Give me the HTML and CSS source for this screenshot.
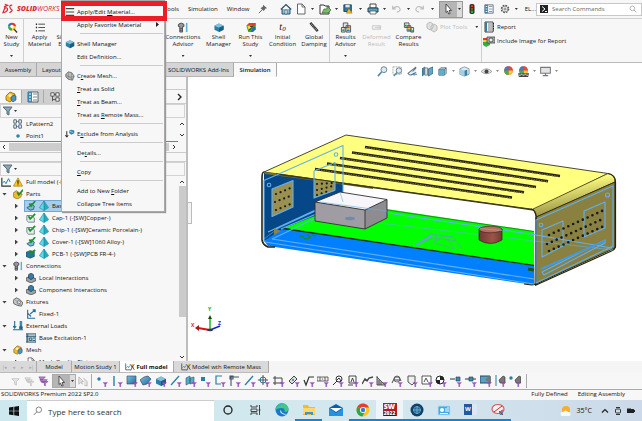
FILE: index.html
```html
<!DOCTYPE html>
<html lang="en">
<head>
<meta charset="utf-8">
<title>SOLIDWORKS Premium 2022 SP2.0</title>
<link rel="stylesheet" href="styles.css">
</head>
<body>
<svg class="defs" aria-hidden="true">
<defs>
<linearGradient id="steel" x1="0" y1="0" x2="1" y2="1"><stop offset="0" stop-color="#7cc4e4"/><stop offset="1" stop-color="#1c6b96"/></linearGradient>
<linearGradient id="bend" x1="0" y1="0" x2="0.35" y2="1"><stop offset="0.3" stop-color="#ffff80"/><stop offset="1" stop-color="#8a8440"/></linearGradient>
<linearGradient id="can" x1="0" x2="1"><stop offset="0" stop-color="#6e3a34"/><stop offset="0.6" stop-color="#9c5448"/><stop offset="1" stop-color="#6e3a34"/></linearGradient>
</defs>
<symbol id="funnel" viewBox="0 0 12 12"><path d="M1 2h9L7 6v4L5 9V6z" fill="#8ba6b4" stroke="#4b6472" stroke-width=".9"/></symbol>
<symbol id="fgray" viewBox="0 0 12 12"><path d="M2 3h8L7 6v4L5 9V6z" fill="#e8e8e8" stroke="#bbb" stroke-width=".8"/></symbol>
<symbol id="fstack" viewBox="0 0 12 12"><path d="M1 2h6L5 5H3zM2 4h7L7 7H4zM4 6h7L8 8v3L7 10V8z" fill="#e4e4e4" stroke="#bbb" stroke-width=".7"/></symbol>
<symbol id="fpurple" viewBox="0 0 12 12"><path d="M1 1h7L5 4H3zM2 4h8L7 7H4zM4 6h7L8 8v3L7 10V8z" fill="#b58ac8" stroke="#7d4296" stroke-width=".7"/></symbol>
<symbol id="fn" viewBox="0 0 12 12"><path d="M7 7.500h4.500L9.800 9.300v2.400H8.700V9.300z" fill="#a34bc8" stroke="#8f45ae" stroke-width=".3"/></symbol>
<symbol id="cursor" viewBox="0 0 12 12"><path d="M4 1l5.500 6.500H7l1.200 3-1.400.6-1.300-3L4 9.500z" fill="#fff" stroke="#333" stroke-width=".8"/></symbol>
<symbol id="cube" viewBox="0 0 12 12"><path d="M1 4l5-2.500L11 4v4.500L6 11 1 8.500z" fill="#2c7fa8"/><path d="M1 4l5-2.500L11 4 6 6.200z" fill="#7fc3df"/><path d="M6 6.200L11 4v4.500L6 11z" fill="#1c5d83"/></symbol>
<symbol id="steelcube" viewBox="0 0 12 12"><path d="M2 4l2-2h6v6L8 10H2z" fill="#bfe3f2" stroke="#3c4b55" stroke-width=".8"/><path d="M2 4h6v6M8 4l2-2" fill="none" stroke="#3c4b55" stroke-width=".8"/><path d="M2 4h6v6H2z" fill="#5aaed2"/></symbol>
<symbol id="shaded" viewBox="0 0 12 12"><path d="M1 3l5-2 5 2v6l-5 2-5-2z" fill="#e2edf2" stroke="#6b7f89" stroke-width=".8"/><path d="M1 3l5 2v6L1 9z" fill="#a5cfe1"/><path d="M6 5l3-1v6l-3 1z" fill="#2f87b0"/></symbol>
<symbol id="lines" viewBox="0 0 12 12"><path d="M1 2h10M1 6h10M1 10h10" stroke="#444" stroke-width="1.400"/></symbol>
<symbol id="bullets" viewBox="0 0 12 12"><path d="M4 2h8M4 6h8M4 10h8" stroke="#444" stroke-width="1.100"/><path d="M1 2h1.500M1 6h1.500M1 10h1.500" stroke="#222" stroke-width="1.700"/></symbol>
<symbol id="study" viewBox="0 0 12 12"><path d="M1.500 5A4.500 4.500 0 0 1 6 .8L6 5z" fill="#2676c9"/><path d="M6 .8A4.500 4.500 0 0 1 10.500 5H6z" fill="#e2352b"/><path d="M1.500 5A4.500 4.500 0 0 0 6 9.500V5z" fill="#36aa3a"/><path d="M6 9.500A4.500 4.500 0 0 0 10.500 5H6z" fill="#f5d327"/><circle cx="6" cy="5" r="2" fill="#f7f7f7"/><path d="M8 7.500l3.500 4" stroke="#333" stroke-width="1.500"/></symbol>
<symbol id="rainbow" viewBox="0 0 12 12"><path d="M1 4l3-3h7v7l-3 3H3z" fill="#37aa3b"/><path d="M4 1h7v3L6 5 1 4z" fill="#e43e2b"/><path d="M2 4l5 0 1 2-5 2z" fill="#f4da27"/><path d="M8 6l3-1v3l-3 3H6z" fill="#2b63c4"/><path d="M4 9l4-4M8 5H5" stroke="#222" fill="none"/></symbol>
<symbol id="bolt" viewBox="0 0 12 12"><path d="M1 2.500Q4-.2 7 2.500V5H5.500v6h-3V5H1z" fill="#9a9a9a" stroke="#333" stroke-width=".8"/><path d="M10 1v10" stroke="#5eb0d4" stroke-width="1.700"/><path d="M2.500 7h3M2.500 9h3" stroke="#333" stroke-width=".7"/></symbol>
<symbol id="damp" viewBox="0 0 12 12"><path d="M2 1l8 9" stroke="#333" stroke-width="2.600"/><path d="M3 2l6 7" stroke="#bbb" stroke-width="1.100" stroke-dasharray="1 1"/></symbol>
<symbol id="results" viewBox="0 0 12 12"><path d="M3 1h5v5H3zM1 6h4v5H1zM6 4h5v7H6z" fill="#dfe4e6" stroke="#444" stroke-width=".9"/><path d="M2 8h2v2H2z" fill="#2a9d3c"/><path d="M7 5h3v2H7z" fill="#df3e2b"/><path d="M7 7h3v1.500H7z" fill="#f2c928"/><path d="M7 8.500h3V10H7z" fill="#2576c0"/></symbol>
<symbol id="compare" viewBox="0 0 12 12"><path d="M1 1h5v5H1zM4 4h4v6H4zM8 6h3v5H8z" fill="#dfe4e6" stroke="#444" stroke-width=".9"/><path d="M1.500 3h2v2h-2zM8.500 9h2v1.500h-2z" fill="#2a9d3c"/><path d="M4.500 5h3v1.500h-3z" fill="#df3e2b"/><path d="M4.500 6.500h3V8h-3z" fill="#f2c928"/><path d="M4.500 8h3v1.500h-3z" fill="#2576c0"/></symbol>
<symbol id="deform" viewBox="0 0 12 12"><path d="M1 4h9v4H1zM4 6h6M8 5l2 1-2 1" fill="#eee" stroke="#ccc"/></symbol>
<symbol id="plot" viewBox="0 0 12 12"><path d="M1 3l3-2 3 2v4L4 9 1 7zM5 5l3-2 3 2v4l-3 2-3-2z" fill="#e1e1e1" stroke="#bbb"/></symbol>
<symbol id="report" viewBox="0 0 12 12"><path d="M2 1h8v10H2z" fill="#fff" stroke="#444"/><path d="M3 1v10" stroke="#357fa5" stroke-width="2"/><path d="M5 3h4M5 5h4M5 7h4M5 9h4" stroke="#555" stroke-width=".8"/><path d="M10.500 2v8" stroke="#222" stroke-dasharray="1.500 1"/></symbol>
<symbol id="photo" viewBox="0 0 12 12"><path d="M0 3h7v7l-4 2-3-2z" fill="#38ae3c"/><path d="M0 3h7v2H0z" fill="#e13c2d"/><path d="M0 5h6v2H0z" fill="#f3d42b"/><path d="M4 2h8v6H4z" fill="#aaa" stroke="#444" stroke-width=".8"/><circle cx="8" cy="5" r="2" fill="#eee" stroke="#444" stroke-width=".8"/></symbol>
<symbol id="home" viewBox="0 0 12 12"><path d="M2 6v5h8V6" fill="#8dbdd6" stroke="#28506b"/><path d="M.8 6.500L6 1.500l5.200 5" fill="none" stroke="#28506b" stroke-width="1.200"/><path d="M5 7h2v4H5z" fill="#fff" stroke="#28506b" stroke-width=".6"/></symbol>
<symbol id="page" viewBox="0 0 12 12"><path d="M2.500 1H7l3 3v7H2.500z" fill="#fff" stroke="#555" stroke-width=".9"/><path d="M7 1v3h3" fill="none" stroke="#555" stroke-width=".8"/></symbol>
<symbol id="open" viewBox="0 0 12 12"><path d="M1 2h4l1 1h4v8H1z" fill="#fff" stroke="#333"/><path d="M3 10l2-4h3V3l4 4-3 3z" fill="#79bd6b" stroke="#39662f" stroke-width=".7"/></symbol>
<symbol id="save" viewBox="0 0 12 12"><path d="M1 1h9v8H1z" fill="#3276a3" stroke="#234"/><path d="M3 1h5v3H3z" fill="#dbe8ee"/><path d="M7 5l4 6H4z" fill="#f5b928" stroke="#74570c" stroke-width=".5"/></symbol>
<symbol id="print" viewBox="0 0 12 12"><path d="M3 1h6v4H3z" fill="#fff" stroke="#444"/><path d="M1 5h10v4H1z" fill="#5ba3c6" stroke="#263c4b"/><path d="M3 8h6v3H3z" fill="#fff" stroke="#444" stroke-width=".7"/></symbol>
<symbol id="undo" viewBox="0 0 12 12"><path d="M2 2v4h4M2 6Q7 1 10 4.500T7 10" fill="none" stroke="#bbb" stroke-width="1.300"/></symbol>
<symbol id="redo" viewBox="0 0 12 12"><path d="M10 2v4H6M10 6Q5 1 2 4.500T5 10" fill="none" stroke="#bbb" stroke-width="1.300"/></symbol>
<symbol id="light" viewBox="0 0 12 12"><rect x="3" y="0" width="6" height="12" rx="2" fill="#302e2b"/><circle cx="6" cy="2.500" r="1.600" fill="#e32b22"/><circle cx="6" cy="6" r="1.300" fill="#8a721e"/><circle cx="6" cy="9.400" r="1.600" fill="#28b13c"/></symbol>
<symbol id="props" viewBox="0 0 12 12"><path d="M1 1h10v10H1z" fill="#fff" stroke="#456" stroke-width=".9"/><path d="M1 1h4v10H1z" fill="#3987ae"/><path d="M2 3h2M2 6h2M2 9h2" stroke="#fff"/><path d="M6 3h4M6 6h4M6 9h4" stroke="#567" stroke-width=".8"/></symbol>
<symbol id="gear" viewBox="0 0 12 12"><circle cx="6" cy="6" r="4.400" fill="none" stroke="#555" stroke-width="1.500" stroke-dasharray="2 1.450"/><circle cx="6" cy="6" r="3.500" fill="#f5f5f5" stroke="#555" stroke-width=".8"/><circle cx="6" cy="6" r="1.300" fill="none" stroke="#555" stroke-width=".8"/></symbol>
<symbol id="glass" viewBox="0 0 12 12"><circle cx="7" cy="4.500" r="3.300" fill="none" stroke="#666" stroke-width=".9"/><path d="M4.600 7L1 10.700" stroke="#666" stroke-width="1.100"/></symbol>
<symbol id="glassr" viewBox="0 0 12 12"><circle cx="5" cy="5" r="3.500" fill="none" stroke="#888" stroke-width=".9"/><path d="M7.500 7.500L11 11" stroke="#888"/></symbol>
<symbol id="pin" viewBox="0 0 12 12"><path d="M6 1l5 4-2 .5-2 3L3 5l3-2z" fill="#666"/><path d="M5 7l-4 4" stroke="#666" stroke-width="1.200"/></symbol>
<symbol id="zoomfit" viewBox="0 0 12 12"><circle cx="7.500" cy="4" r="3.200" fill="#dceaf1" stroke="#667c88"/><path d="M5 6.500L1 11" stroke="#568ba6" stroke-width="1.800"/></symbol>
<symbol id="zoomarea" viewBox="0 0 12 12"><path d="M1 1h9v8H1z" fill="none" stroke="#777" stroke-width=".7" stroke-dasharray="2 1"/><circle cx="7.500" cy="5" r="3" fill="#dceaf1" stroke="#667c88"/><path d="M5.500 7L2 11" stroke="#568ba6" stroke-width="1.600"/></symbol>
<symbol id="prevview" viewBox="0 0 12 12"><path d="M10 1L1 8q2 3 5 1l4-2M6 6l4-4" fill="#e8eef1" stroke="#5d7582" stroke-width="1.100"/><path d="M7 9h4M8 7.500L6.500 9 8 10.500" stroke="#237aa6" fill="none"/></symbol>
<symbol id="section" viewBox="0 0 12 12"><path d="M0 3l3-2v8l-3 2z" fill="#3b8db3" stroke="#345" stroke-width=".5"/><path d="M3 2h3v8H3z" fill="#d4dde1" stroke="#567" stroke-width=".7"/><path d="M7 3l5-2v7l-5 3z" fill="#5caace" stroke="#345" stroke-width=".7"/></symbol>
<symbol id="eye" viewBox="0 0 12 12"><path d="M0 6q6-6 12 0-6 5-12 0z" fill="#e5e5e5" stroke="#888" stroke-width=".8"/><circle cx="6" cy="6" r="2.200" fill="#444"/></symbol>
<symbol id="ball" viewBox="0 0 12 12"><circle cx="6" cy="5" r="4.800" fill="#e9483b"/><path d="M6 5V.2A4.800 4.800 0 0 1 10.800 5z" fill="#e9483b"/><path d="M6 5H1.200A4.800 4.800 0 0 1 6 .2z" fill="#377fcb"/><path d="M6 5h4.800A4.800 4.800 0 0 1 6 9.800z" fill="#f5c832"/><path d="M1.200 5H6v4.800A4.800 4.800 0 0 1 1.200 5z" fill="#3db254"/></symbol>
<symbol id="scene" viewBox="0 0 12 12"><use href="#ball"/><path d="M0 8h12l-1 4H1z" fill="#444"/><path d="M1 10h2M5 10h2M9 10h2M3 9h2M7 9h2" stroke="#eee"/></symbol>
<symbol id="monitor" viewBox="0 0 12 12"><path d="M.7 1.500h10.600v6.500H.7z" fill="#e1e5e7" stroke="#777" stroke-width="1.100"/><path d="M6 8v2M3 10.500h6" stroke="#777" stroke-width="1.300"/></symbol>
<symbol id="asm" viewBox="0 0 12 12"><path d="M1 5l4-4 5 2-1 5-4 3-4-2z" fill="#eebc2b" stroke="#8b6510" stroke-width=".8"/><path d="M6 6l3-2 2 1v4L8 11 6 9z" fill="#4799bf" stroke="#225" stroke-width=".5"/><circle cx="5" cy="4.500" r="1.500" fill="#fff0b0"/></symbol>
<symbol id="parts" viewBox="0 0 12 12"><path d="M0 5l4-3 4 3 3 1-2 4-4 2-4-2z" fill="#eebc2b" stroke="#8b6510" stroke-width=".8"/><path d="M5 4l2 3 5-6" fill="none" stroke="#17922c" stroke-width="2"/></symbol>
<symbol id="config" viewBox="0 0 12 12"><path d="M1 1h4v4H1zM7 1h4v4H7zM7 7h4v4H7zM3 5v6M3 9h4M5 3h2" fill="#f5f5f5" stroke="#444"/></symbol>
<symbol id="pattern" viewBox="0 0 12 12"><path d="M1 1h3v4H1zM7 1h3v4H7zM1 7h3v4H1zM7 7h3v4H7z" fill="#fff" stroke="#334b59"/><path d="M4 3h3M4 9h3" stroke="#348" stroke-width=".7"/></symbol>
<symbol id="warn" viewBox="0 0 12 12"><path d="M6 1l5.500 10H.5z" fill="#ffc619" stroke="#8c6a09" stroke-width=".7"/><path d="M6 4v4M6 9v1" stroke="#222" stroke-width="1.400"/></symbol>
<symbol id="graph" viewBox="0 0 12 12"><path d="M1 1v10h11" fill="none" stroke="#333" stroke-width="1.400"/><path d="M1 8l3-3 2 3 3-6 2 4" fill="none" stroke="#2582b4" stroke-width="1.200"/></symbol>
<symbol id="checked" viewBox="0 0 12 12"><path d="M1 3h6l3 3v5H3L1 9z" fill="#e6ecee" stroke="#56666f" stroke-width=".9"/><path d="M3 4l2 3 6-6" fill="none" stroke="#17922c" stroke-width="2"/></symbol>
<symbol id="sheet" viewBox="0 0 12 12"><path d="M1 8l4-2 1-3 4 3-1 4-4 1z" fill="#75b9d5" stroke="#2b5972"/><path d="M4 3l2 3 5-6" fill="none" stroke="#17922c" stroke-width="2"/></symbol>
<symbol id="solid" viewBox="0 0 12 12"><path d="M0 4l5-2 5 1v6l-5 2-5-2z" fill="#24749e" stroke="#123c55" stroke-width=".7"/><path d="M4 2l2 3 5-4" fill="none" stroke="#17922c" stroke-width="2"/></symbol>
<symbol id="mesh" viewBox="0 0 12 12"><path d="M6 0l5.500 8L6 11.500.5 8z" fill="#5adbe8" stroke="#177c98" stroke-width=".7"/><path d="M6 0l5.500 8L6 11.500z" fill="#27aabd"/><path d="M6 0v11" stroke="#147a91" stroke-width=".7"/></symbol>
<symbol id="contact" viewBox="0 0 12 12"><path d="M0 6l5-2 7 3v2l-6 3-6-3z" fill="#9da4a8" stroke="#333" stroke-width=".8"/><path d="M3 2l3-2 3 2v4L6 8 3 6z" fill="#317da3" stroke="#234" stroke-width=".8"/></symbol>
<symbol id="fixture" viewBox="0 0 12 12"><path d="M0 4l4-3 4 2 4 4-2 4-5-1-4-2z" fill="#c3c8ca" stroke="#555"/><circle cx="7" cy="6.500" r="2" fill="#eee" stroke="#666"/><path d="M2 3l8 7" stroke="#777" stroke-width=".6"/></symbol>
<symbol id="fixed" viewBox="0 0 12 12"><path d="M2 1v10h9M2 5l4 4M5 6l6-5M8 1h3v3" fill="none" stroke="#1d6e9f" stroke-width="1.300"/></symbol>
<symbol id="loads" viewBox="0 0 12 12"><path d="M2 0v8M.2 6L2 8.500 3.800 6M0 10.500h12" fill="none" stroke="#246b91" stroke-width="1.300"/><path d="M8 0h3v7H8z" fill="#378bb1"/><circle cx="9.500" cy="8" r="2.300" fill="#2c6381"/></symbol>
<symbol id="excite" viewBox="0 0 12 12"><path d="M0 1h12v10H0z" fill="#bed7e1" stroke="#31495a"/><path d="M2 1v10M0 4h12M4 6h3v3H4zM8 6h3M8 9h3" fill="none" stroke="#234d65" stroke-width="1"/></symbol>
<symbol id="exclude" viewBox="0 0 14 12"><path d="M2.500 2v8M.5 7.500l2 3 2-3" fill="none" stroke="#111" stroke-width="1.200"/><path d="M6 1l3-1 4 1v4L9 7 6 5z" fill="#3b86ab"/><path d="M7 2l4 2" stroke="#bde" /></symbol>
<symbol id="meshpart" viewBox="0 0 12 12"><path d="M1 4l3-3 4 1 3 4-2 5-5-1-3-3z" fill="#bbb" stroke="#666"/><path d="M4 1v9M1 4l8 6M8 2v9M1 7h10" stroke="#777" stroke-width=".6" fill="none"/></symbol>
<symbol id="chk" viewBox="0 0 14 12"><path d="M1 1v9h7" fill="none" stroke="#333"/><path d="M2 7l2-2 1 2 2-3" fill="none" stroke="#2582b4"/><path d="M8 4l2-3 3 5-3 2z" fill="#f2bd18"/><path d="M7 2l3 4 3-4M10 6l-2 5M10 5l3 5" fill="none" stroke="#444" stroke-width="1.100"/></symbol>
</svg>

<div class="app">
<header class="titlebar">
  <div class="brand"><svg viewBox="0 0 14 12"><path d="M3 1l3 1-4 2M3 5q3-1 3 1.500T1 10l2-5M11 2Q8 1.500 8.500 4t2 3-2.500 3" fill="none" stroke="#d92a35" stroke-width="1.300"/></svg><b>SOLID</b><span>WORKS</span></div>
  <nav class="menus"><a href="#">Tools</a><a href="#">Simulation</a><a href="#">Window</a><svg class="i10"><use href="#pin"/></svg></nav>
  <div class="quick">
    <button class="home" aria-label="Home"><svg class="i12"><use href="#home"/></svg></button>
    <button class="q" aria-label="New"><svg class="i12"><use href="#page"/></svg><i class="caret"></i></button>
    <button class="q" aria-label="Open"><svg class="i12"><use href="#open"/></svg><i class="caret"></i></button>
    <button class="q" aria-label="Save"><svg class="i10"><use href="#save"/></svg><i class="caret"></i></button>
    <button class="q" aria-label="Print"><svg class="i12"><use href="#print"/></svg><i class="caret"></i></button>
    <button class="q" aria-label="Undo"><svg class="i10"><use href="#undo"/></svg><i class="caret"></i></button>
    <button class="q" aria-label="Redo"><svg class="i10"><use href="#redo"/></svg><i class="caret"></i></button>
  </div>
  <button class="select" aria-label="Select"><svg class="i12"><use href="#cursor"/></svg><i class="caret"></i></button>
  <div class="quick2">
    <button aria-label="Rebuild"><svg class="i10"><use href="#light"/></svg></button>
    <button aria-label="File properties"><svg class="i10"><use href="#props"/></svg></button>
    <button aria-label="Options"><svg class="i10"><use href="#gear"/></svg></button>
    <i class="caret"></i><span>EL...</span>
  </div>
  <div class="search"><span class="prompt"><svg viewBox="0 0 8 8"><path d="M2 1.500l3 2.500-3 2.500M5 6.500h2" fill="none" stroke="#fff"/></svg></span><input type="text" aria-label="Search commands" placeholder="Search Commands"><svg class="i8"><use href="#glassr"/></svg></div>
</header>

<section class="ribbon">
  <button class="cmd w24 line"><svg class="i12"><use href="#study"/></svg><span>New<br>Study</span><i class="caret"></i></button>
  <button class="cmd w30"><svg class="i10"><use href="#bullets"/></svg><span>Apply<br>Material</span></button>
  <button class="cmd w34"><svg class="i10"><use href="#graph"/></svg><span>Simulation<br>Evaluator</span></button>
  <div class="covered"></div>
  <button class="cmd w38"><svg class="i12"><use href="#bolt"/></svg><span>Connections<br>Advisor</span><i class="caret"></i></button>
  <button class="cmd w34"><svg class="i12"><use href="#cube"/></svg><span>Shell<br>Manager</span></button>
  <button class="cmd w30"><svg class="i12"><use href="#rainbow"/></svg><span>Run This<br>Study</span><i class="caret"></i></button>
  <button class="cmd w34"><em>t<sub>0</sub></em><span>Initial<br>Condition</span></button>
  <button class="cmd w30 line"><svg class="i12"><use href="#damp"/></svg><span>Global<br>Damping</span></button>
  <button class="cmd w30"><svg class="i12"><use href="#results"/></svg><span>Results<br>Advisor</span><i class="caret"></i></button>
  <button class="cmd w30 off" disabled><svg class="i12"><use href="#deform"/></svg><span>Deformed<br>Result</span></button>
  <button class="cmd w34"><svg class="i12"><use href="#compare"/></svg><span>Compare<br>Results</span></button>
  <div class="plot"><button disabled><svg class="i12"><use href="#plot"/></svg>Plot Tools<i class="caret"></i></button></div>
  <div class="reports"><button><svg class="i12"><use href="#report"/></svg>Report</button><button><svg class="i12"><use href="#photo"/></svg>Include Image for Report</button></div>
</section>

<div class="tabrow">
  <nav class="tabs"><a href="#" class="t1">Assembly</a><a href="#" class="t2">Layout</a><a href="#" class="t3">SOLIDWORKS Add-Ins</a><a href="#" class="t4">Simulation</a></nav>
  <div class="headsup">
    <svg class="i11"><use href="#zoomfit"/></svg><svg class="i11"><use href="#zoomarea"/></svg><svg class="i11"><use href="#prevview"/></svg><svg class="i11"><use href="#section"/></svg><span><svg class="i11"><use href="#steelcube"/></svg><i class="caret"></i></span><span><svg class="i11"><use href="#shaded"/></svg><i class="caret"></i></span><span><svg class="i11"><use href="#eye"/></svg><i class="caret"></i></span><svg class="i11"><use href="#ball"/></svg><span><svg class="i11"><use href="#scene"/></svg><i class="caret"></i></span><span><svg class="i11"><use href="#monitor"/></svg><i class="caret"></i></span>
  </div>
</div>

<main class="work">
  <aside class="panel">
    <div class="ptop"></div>
    <div class="ptabs"><button class="on" aria-label="Tree"><svg class="i12"><use href="#asm"/></svg></button><button aria-label="Properties"><svg class="i12"><use href="#props"/></svg></button><button aria-label="Configurations"><svg class="i10"><use href="#config"/></svg></button><svg class="chev" viewBox="0 0 6 8"><path d="M1 1l3 3-3 3" fill="none" stroke="#222" stroke-width="1.300"/></svg></div>
    <div class="filter"><svg class="i12"><use href="#funnel"/></svg><i class="caret"></i></div>
    <div class="upper">
      <ul><li><svg class="i10"><use href="#pattern"/></svg>LPattern2</li><li><svg class="i10" viewBox="0 0 10 10"><circle cx="5" cy="5" r="1.800" fill="#2d84ad"/></svg>Point1</li></ul>
      <div class="vs"><svg viewBox="0 0 6 4"><path d="M1 3l2-2 2 2" fill="none" stroke="#333"/></svg><svg viewBox="0 0 6 4"><path d="M1 1l2 2 2-2" fill="none" stroke="#333"/></svg></div>
    </div>
    <div class="hs"><svg viewBox="0 0 4 6"><path d="M3 1L1 3l2 2" fill="none" stroke="#333"/></svg><div></div><svg viewBox="0 0 4 6"><path d="M1 1l2 2-2 2" fill="none" stroke="#333"/></svg></div>
    <div class="split"></div>
    <div class="filter"><svg class="i12"><use href="#funnel"/></svg><i class="caret"></i></div>
    <div class="lower">
      <ul class="tree">
        <li class="root"><svg class="i10"><use href="#graph"/></svg><svg class="i10"><use href="#warn"/></svg><span>Full model (-Base-)</span></li>
        <li><i class="tw open"></i><svg class="i10"><use href="#parts"/></svg><span>Parts</span></li>
        <li class="sub two"><i class="tw"></i><div class="sel"><svg class="i10"><use href="#sheet"/></svg><svg class="i10"><use href="#mesh"/></svg><span>Base-1</span></div></li>
        <li class="sub two"><i class="tw"></i><svg class="i10"><use href="#checked"/></svg><svg class="i10"><use href="#mesh"/></svg><span>Cap-1 (-[SW]Copper-)</span></li>
        <li class="sub two"><i class="tw"></i><svg class="i10"><use href="#checked"/></svg><svg class="i10"><use href="#mesh"/></svg><span>Chip-1 (-[SW]Ceramic Porcelain-)</span></li>
        <li class="sub two"><i class="tw"></i><svg class="i10"><use href="#sheet"/></svg><svg class="i10"><use href="#mesh"/></svg><span>Cover-1 (-[SW]1060 Alloy-)</span></li>
        <li class="sub two"><i class="tw"></i><svg class="i10"><use href="#solid"/></svg><svg class="i10"><use href="#mesh"/></svg><span>PCB-1 (-[SW]PCB FR-4-)</span></li>
        <li><i class="tw open"></i><svg class="i10"><use href="#bolt"/></svg><span>Connections</span></li>
        <li class="sub"><i class="tw"></i><svg class="i10"><use href="#contact"/></svg><span>Local Interactions</span></li>
        <li class="sub"><i class="tw"></i><svg class="i10"><use href="#contact"/></svg><span>Component Interactions</span></li>
        <li><i class="tw open"></i><svg class="i10"><use href="#fixture"/></svg><span>Fixtures</span></li>
        <li class="sub"><i class="tw none"></i><svg class="i10"><use href="#fixed"/></svg><span>Fixed-1</span></li>
        <li><i class="tw open"></i><svg class="i10"><use href="#loads"/></svg><span>External Loads</span></li>
        <li class="sub"><i class="tw none"></i><svg class="i10"><use href="#excite"/></svg><span>Base Excitation-1</span></li>
        <li><i class="tw open"></i><svg class="i10"><use href="#asm"/></svg><span>Mesh</span></li>
        <li class="sub"><i class="tw"></i><svg class="i10"><use href="#page"/></svg><span>Mesh Quality Plot</span></li>
      </ul>
      <div class="vs tall"><svg viewBox="0 0 6 4"><path d="M1 3l2-2 2 2" fill="none" stroke="#333"/></svg><div></div><svg viewBox="0 0 6 4"><path d="M1 1l2 2 2-2" fill="none" stroke="#333"/></svg></div>
    </div>
    <div class="grip"></div>
  </aside>

  <svg class="scene" viewBox="188 77 454 284" role="img" aria-label="Enclosure assembly">
    <g stroke-linejoin="round">
      <path d="M264 172L343 184V206L264 241z" fill="#064887"/>
      <path d="M284 228L343 205 387 209 534 231V265z" fill="#0f0"/>
      <path d="M264 241L283 228.500 534 266V285L268 246z" fill="#0080ff"/>
      <path d="M283 228.500L534 265.500" stroke="#0d360a" stroke-width="1.400"/>
      <path d="M387 210L534 231.500" stroke="#276526" stroke-width=".7"/>
      <path d="M264 172L346 135 608 173.500 534 209.500z" fill="#ffff80" stroke="#353419" stroke-width=".9"/>
      <path d="M264 172l109 15v2L318 181l-53-7z" fill="#776f32"/>
      <path d="M276 174l258 36" stroke="#3b381c" stroke-width="1.300"/>
      <g stroke="#24220f" stroke-width="2.500"><path d="M365 147l195 29M352 152.500l196 28.700M340 158l196 29M327 163.500l197 28.800M315 169l197 28.500"/></g>
      <g stroke="#777132" stroke-width="1.200" stroke-dasharray="1.500 1"><path d="M366 147.500l193 29M353 153l194 28.500M341 158.500l194 29M328 164l195 28.800M316 169.500l195 28.500"/></g>
      <path d="M533 209L608 173.500Q615 174 615 182L537 217z" fill="url(#bend)" stroke="#403b1c" stroke-width=".8"/>
      <path d="M536 217L615 182V248L535 284.500z" fill="#8a8140" stroke="#2d2b16" stroke-width="1"/>
      <path d="M531 209Q536 210 536 217V284l-4 1-8-1M608 173.500Q615.500 175 615.500 182V247q-1 3-4 4L535 285.500" fill="none" stroke="#26240f" stroke-width="1.200"/>
      <path d="M264 172q-2 0-2 6V240q1 5 6 7h7" fill="none" stroke="#262718" stroke-width="1.600"/>
      <path d="M272 189l21-8.500V207l-21 9.500z" fill="#9a9150"/>
      <path d="M314 179.500l21 3V191l-21 7z" fill="#9a9150"/>
      <g stroke="#151b19" stroke-width="2.200" stroke-linecap="round" stroke-dasharray="0 4.900"><path d="M276 194l16-6.500M275 202l18-7M276 210l17-7M317 184l16-1M317 190l16-4M317 195l12-4"/></g>
      <g fill="none" stroke="#63b0ef" stroke-width="1.100">
        <path d="M264 180.500L343 145.500V209M264 180v62M272 189l21-8.500V207l-21 9.500zM314 171l21-8.500V190l-21 8z"/>
        <circle cx="269" cy="185" r="1.800"/><circle cx="336" cy="154.500" r="1.800"/>
        <path d="M268 232L335 201v5L281 229M276 229L337 201M272 239L316 218M265 242L534 284M272 239L534 279M387 213L536 235 612 248M536 220l77-34v60l-77 37zM542 230l21-9v25l-21 11zM584 211l21-9v26l-21 9zM542 272L605 240v3L544 275z"/>
        <circle cx="541" cy="225" r="1.800"/><circle cx="607.500" cy="195" r="2"/>
        <path d="M344 219L613 250M264 239L280 227" stroke-width=".6"/>
      </g>
      <path d="M415 246l16-12 22 3 9 12M418 244l16-6 22 3M426 237l-2 5M437 235l-2 8 20 6M445 236l8 11M434 243l8-7 10 1" fill="none" stroke="#4fae9c" stroke-width=".8"/><path d="M415 246l17-11" stroke="#63a6d8" stroke-width="2"/>
      <path d="M274 228l7 3-7 4z" fill="#8b8344"/>
      <path d="M541 269L605 241" stroke="#4199e3" stroke-width="2"/>
      <g stroke="#151b19" stroke-width="2.600" stroke-linecap="round" stroke-dasharray="0 5.300"><path d="M549 235l54-24.500M547 244l58-26M549 251l54-24.500"/></g>
      <path d="M299 236l5 1m3-2l4 2m1-2l4 1m-12 3l6-1" stroke="#158c38" stroke-width="1.600"/>
      <path d="M315 202L340 192 387 199.500 365 210z" fill="#f7f7fb"/>
      <path d="M315 202l50 8v19l-50-8z" fill="#9f9da3"/><path d="M365 210l22-10.500V218l-22 11z" fill="#8e8c91"/>
      <path d="M315 202L340 192 387 199.500V218l-22 11-50-8zM315 202l50 8v19M365 210l22-10.500" fill="none" stroke="#303033" stroke-width=".9"/>
      <path d="M320 202l67 9M340 192l3 10" stroke="#70acd9" stroke-width=".6" fill="none"/><ellipse cx="350" cy="218.500" rx="5" ry="1.800" fill="#688eae"/>
      <path d="M479 229v11q11 7 23 0V229z" fill="url(#can)" stroke="#351d1a" stroke-width=".7"/><ellipse cx="490.500" cy="229.500" rx="11.500" ry="3.300" fill="#b96c5d" stroke="#482621" stroke-width=".7"/>
      <path d="M480 228.500l22 2" stroke="#b79dad" stroke-width=".7"/>
      <path d="M528 269l6 1" stroke="#0c5a18" stroke-width="3"/>
    </g>
    <g stroke-width="1.500"><path d="M210 330V317" stroke="#21b321"/><path d="M210 330l-12-2" stroke="#d31417" stroke-width="2"/><path d="M210 330l10-4" stroke="#1824c6"/><path d="M208 319h4l-2-4z" fill="#164f16"/><path d="M199 325l-4 3 4 3z" fill="#b11"/></g><ellipse cx="210" cy="330" rx="3" ry="1.300" fill="#273b58"/>
    <text x="208" y="311" class="axis" fill="#21a821">Y</text><text x="191" y="327" class="axis" fill="#dd2222">X</text><text x="218" y="325" class="axis" fill="#2222cc">Z</text>
  </svg>
</main>

<nav class="sheets"><div class="navs"><i>|◂</i><i>◂</i><i>▸</i><i>▸|</i></div><a href="#" class="s1">Model</a><a href="#" class="s2">Motion Study 1</a><a href="#" class="s3"><svg class="i10"><use href="#chk"/></svg>Full model</a><a href="#" class="s4"><svg class="i10"><use href="#chk"/></svg>Model wth Remote Mass</a></nav>

<div class="filters">
  <svg class="i11"><use href="#fgray"/></svg><svg class="i11"><use href="#fstack"/></svg><svg class="i11"><use href="#fpurple"/></svg>
  <button class="select" aria-label="Select"><svg class="i12"><use href="#cursor"/></svg><i class="caret"></i></button>
  <svg class="i11" viewBox="0 0 12 12"><path d="M2 1l5 5H5l1 3-2-2-2 2zM7 2l4 4v5l-3-1" fill="#e4e4e4" stroke="#bbb"/></svg>
  <div class="set">
    <svg viewBox="0 0 12 12"><circle cx="3" cy="4" r="1.700" fill="#277fa8"/><use href="#fn"/></svg>
    <svg viewBox="0 0 12 12"><path d="M3 1v10" stroke="#277fa8" stroke-width="1.400"/><use href="#fn"/></svg>
    <svg viewBox="0 0 12 12"><path d="M1 1h9v8H1z" fill="url(#steel)" stroke="#345" stroke-width=".6"/><use href="#fn"/></svg>
    <svg viewBox="0 0 12 12"><path d="M0 5l4-3 4-1 3 3-4 5-4 1z" fill="url(#steel)" stroke="#235" stroke-width=".6"/><use href="#fn"/></svg>
    <svg viewBox="0 0 12 12"><use href="#cube"/><use href="#fn"/></svg>
    <svg viewBox="0 0 12 12"><path d="M1 10L9 1" stroke="#277fa8" stroke-width="1.300"/><use href="#fn"/></svg>
    <svg viewBox="0 0 12 12"><path d="M1 3l4-2v7l-4 2zM5 3l4-1v6L5 9z" fill="#58a8cd" stroke="#356" stroke-width=".6"/><use href="#fn"/></svg>
    <svg viewBox="0 0 12 12"><path d="M2 2h4v4H2z" fill="#277fa8"/><use href="#fn"/></svg>
    <svg viewBox="0 0 12 12"><path d="M8 1H2v8h5" fill="none" stroke="#277fa8" stroke-width="1.200"/><use href="#fn"/></svg>
    <svg viewBox="0 0 12 12"><path d="M2 11V2h8M1 1h3v3H1z" fill="none" stroke="#456" stroke-width="1.100"/><use href="#fn"/></svg>
    <svg viewBox="0 0 12 12"><path d="M1 10L9 1" stroke="#277fa8" stroke-width="1.300"/><use href="#fn"/></svg>
    <svg viewBox="0 0 12 12"><circle cx="5" cy="5" r="3" fill="none" stroke="#277fa8"/><path d="M5 0v10M0 5h10" stroke="#333" stroke-width=".8"/><use href="#fn"/></svg>
    <svg viewBox="0 0 12 12"><path d="M2 1v9M2 3h7v5H2M0 3h2M0 8h2" fill="none" stroke="#444"/><use href="#fn"/></svg>
    <svg viewBox="0 0 12 12"><path d="M1 6l5-5 3 3-5 5z" fill="#ddd" stroke="#444"/><circle cx="5" cy="5" r="1" fill="#277fa8"/><use href="#fn"/></svg>
    <svg viewBox="0 0 12 12"><path d="M1 5l2 5L6 2h5" fill="none" stroke="#333" stroke-width="1.200"/><use href="#fn"/></svg>
    <svg viewBox="0 0 12 12"><path d="M0 2h11v4H0zM3 2v4M8 2v4M5 4h1" fill="#eee" stroke="#444" stroke-width=".8"/><use href="#fn"/></svg>
    <svg viewBox="0 0 12 12"><circle cx="7" cy="4" r="3" fill="none" stroke="#333"/><path d="M1 10l4-4M5 5l2-2 2 3" stroke="#333" fill="none"/><use href="#fn"/></svg>
    <svg viewBox="0 0 12 12"><path d="M2 1h7v7H2zM4 7l1.500-4L7 7M1 10h5" fill="none" stroke="#333" stroke-width=".9"/><use href="#fn"/></svg>
    <svg viewBox="0 0 12 12"><path d="M0 9l3-5 2 2 2-3 4-1M4 6v-2" fill="none" stroke="#444" stroke-width="1.400"/><use href="#fn"/></svg>
    <svg viewBox="0 0 12 12"><path d="M1 1v9h8L1 2M3 5v5M5 7v3" fill="#bbb" stroke="#444" stroke-width=".9"/><use href="#fn"/></svg>
    <svg viewBox="0 0 12 12"><path d="M1 8l3-6h4l2 4M3 5h6" fill="none" stroke="#444"/><circle cx="6" cy="4" r="3" fill="none" stroke="#555" stroke-width=".8"/><use href="#fn"/></svg>
    <svg viewBox="0 0 12 12"><path d="M2 1h7v6L6 10 2 7z" fill="#eee" stroke="#555"/><use href="#fn"/></svg>
    <svg viewBox="0 0 12 12"><path d="M1 1h9v8H1zM3 7l2-4 2 4" fill="#fff" stroke="#444" stroke-width=".9"/><use href="#fn"/></svg>
    <svg viewBox="0 0 12 12"><circle cx="5" cy="5" r="4" fill="#fff" stroke="#222"/><path d="M5 1a4 4 0 0 1 4 4H1a4 4 0 0 0 4 4z" fill="#222"/><use href="#fn"/></svg>
    <svg viewBox="0 0 12 12"><path d="M0 4h5" stroke="#333"/><path d="M6 2h4v4H6z" fill="#378eb5" stroke="#234" stroke-width=".6"/><use href="#fn"/></svg>
    <svg viewBox="0 0 12 12"><path d="M0 4h11" stroke="#333"/><path d="M4 2h4v4H4z" fill="#378eb5" stroke="#234" stroke-width=".6"/><use href="#fn"/></svg>
    <svg viewBox="0 0 12 12"><path d="M0 1h10v7H0z" fill="#55a2c5" stroke="#345"/><path d="M5 5l4-4 2 1v6" fill="#777"/><use href="#fn"/></svg>
    <svg viewBox="0 0 12 12"><path d="M2 0v11" stroke="#277fa8"/><path d="M5 5l4-4 2 1v6H6z" fill="#777" stroke="#333" stroke-width=".6"/><use href="#fn"/></svg>
    <svg viewBox="0 0 12 12"><circle cx="2" cy="3" r="1.700" fill="#277fa8"/><path d="M6 5l4-4 2 1v6H7z" fill="#777" stroke="#333" stroke-width=".6"/><use href="#fn"/></svg>
  </div>
</div>

<footer class="status"><span>SOLIDWORKS Premium 2022 SP2.0</span><span class="fd">Fully Defined</span><span class="ea">Editing Assembly</span></footer>

<footer class="taskbar">
  <button class="start" aria-label="Start"><svg viewBox="0 0 10 10"><path d="M0 1.500l4.500-.7v3.900H0zM5.200.7L10 0v4.700H5.200zM0 5.300h4.500v3.900L0 8.500zM5.200 5.300H10V10l-4.800-.7z" fill="#111"/></svg></button>
  <label class="find"><svg class="i10"><use href="#glass"/></svg><input type="text" aria-label="Type here to search" placeholder="Type here to search"></label>
  <div class="apps">
    <button aria-label="Cortana"><svg viewBox="0 0 14 14"><circle cx="7" cy="7" r="4" fill="none" stroke="#222" stroke-width="1.300"/></svg></button>
    <button aria-label="Task view"><svg viewBox="0 0 14 14"><path d="M3 2v2h6V2M3 12v-2h6v2M3 6h6v2.500H3zM11.500 2v10M10.500 7h2" fill="none" stroke="#333" stroke-width=".9"/></svg></button>
    <button aria-label="Edge"><svg viewBox="0 0 14 14"><circle cx="7" cy="7" r="6.500" fill="#1679c9"/><path d="M.5 7A6.500 6.500 0 0 1 13.500 6q0 3-4 3 1-4-3-4T.5 7z" fill="#45c788"/><path d="M.5 6A6.500 6.500 0 0 1 9 .8q-5 1-8.500 5.200z" fill="#28aed0"/><path d="M6 7q0 4 6 4-3 1.500-5.500-.5T6 7z" fill="#d3e6ef"/></svg></button>
    <button class="run" aria-label="File Explorer"><svg viewBox="0 0 14 14"><path d="M1 2h5l1 2h6v8H1z" fill="#f3b934"/><path d="M1 5h12v6H1z" fill="#ffd967"/><path d="M3 9h8v3H9v-1H5v1H3z" fill="#3796d3"/></svg></button>
    <button aria-label="Mail"><svg viewBox="0 0 14 14"><path d="M0 5l7-4 7 4v8H0z" fill="#0b5fae"/><path d="M1 5h12L7 9z" fill="#fff"/><path d="M0 5l7 5 7-5v8H0z" fill="#2492e0"/></svg></button>
    <button class="run" aria-label="Chrome"><svg viewBox="0 0 14 14"><circle cx="7" cy="7" r="6.500" fill="#f9c521"/><path d="M7 7L1.500 3.500A6.500 6.500 0 0 1 13 4.500H7z" fill="#e43e31"/><path d="M7 7L1.500 3.500A6.500 6.500 0 0 0 6.500 13.500L9 8z" fill="#2da44f"/><circle cx="7" cy="7" r="3" fill="#fff"/><circle cx="7" cy="7" r="2.200" fill="#3579dd"/></svg></button>
    <button class="run cur" aria-label="SOLIDWORKS"><span class="sw">SW<small>2022</small></span></button>
    <button class="run" aria-label="Viewer"><svg viewBox="0 0 14 14"><circle cx="7" cy="7" r="6.500" fill="#123f66"/><circle cx="7" cy="7" r="3.500" fill="#25618d" stroke="#5bb0d8" stroke-width=".8"/><path d="M7 3v8M3 7h8" stroke="#8cc8e5" stroke-width=".7"/></svg></button>
    <button class="run" aria-label="Control panel"><svg viewBox="0 0 14 14"><path d="M1 3h12v9H1z" fill="#43a8e0" stroke="#b9def0"/><circle cx="5" cy="7" r="2" fill="#fff"/><path d="M8 6h4M8 8h4M3 10.500h8" stroke="#fff"/><path d="M10 4h2v1h-2z" fill="#f7c83a"/></svg></button>
    <button class="run" aria-label="Word"><span class="word">W</span></button>
    <button class="run" aria-label="Snipping tool"><svg viewBox="0 0 14 14"><ellipse cx="7" cy="6" rx="6" ry="4.500" fill="#f6f0f0" stroke="#d35c5c" stroke-width="1.200"/><path d="M3 9l8-6M8 8l4 4M10 8l2-1" stroke="#b33" /><circle cx="10" cy="10" r="1.500" fill="none" stroke="#2782c4"/></svg></button>
  </div>
  <div class="tray"><svg class="i12" viewBox="0 0 12 12"><circle cx="6" cy="5" r="4" fill="#f8ae25"/><path d="M2 11a2 2 0 0 1 1-4q3-3 5 0a2 2 0 0 1 1 4z" fill="#f5fafc"/></svg><span>35°C</span><svg class="i8" viewBox="0 0 8 8"><path d="M1 5.500l3-3 3 3" fill="none" stroke="#222" stroke-width="1.200"/></svg><svg class="i8" viewBox="0 0 8 8"><rect x="1.500" y="2" width="5" height="4" rx="1" fill="none" stroke="#333"/><path d="M2 .5h4M2 7.500h4" stroke="#333"/></svg><svg class="i8" viewBox="0 0 8 8"><path d="M0 2h7v4H0z" fill="#222"/><path d="M7.500 3v2M1 1v2M3 1v2" stroke="#222"/></svg></div>
</footer>
</div>

<div class="ctx" role="menu">
  <button class="hot"><svg class="i10"><use href="#lines"/></svg><span>Apply/Edit <u>M</u>aterial...</span></button>
  <button><i></i><span>Apply Favorite Material</span><b class="more"></b></button><hr>
  <button><svg class="i10"><use href="#cube"/></svg><span>Shell Manager</span></button>
  <button><i></i><span>Edit Definition...</span></button><hr>
  <button><svg class="i10"><use href="#meshpart"/></svg><span>C<u>r</u>eate Mesh...</span></button>
  <button><i></i><span><u>T</u>reat as Solid</span></button>
  <button><i></i><span><u>T</u>reat as Beam...</span></button>
  <button><i></i><span>Treat as <u>R</u>emote Mass...</span></button><hr>
  <button><svg class="i10"><use href="#exclude"/></svg><span>E<u>x</u>clude from Analysis</span></button><hr>
  <button><i></i><span>De<u>t</u>ails...</span></button><hr>
  <button><i></i><span><u>C</u>opy</span></button><hr>
  <button><i></i><span>Add to New <u>F</u>older</span></button>
  <button><i></i><span>Collapse Tree Items</span></button>
</div>
<div class="mark"></div>
</body>
</html>
```
FILE: styles.css
```css
* { box-sizing: border-box; }
body { margin: 0; font-family: "Open Sans", "Noto Sans", sans-serif; font-size: 6px; font-weight: 500; line-height: 8px; color: #111; background: #f7f7f7; overflow: hidden; }
button, input { font: inherit; color: inherit; border: 0; padding: 0; margin: 0; background: none; min-width: 0; }
button { display: flex; align-items: center; white-space: nowrap; }
a { color: inherit; text-decoration: none; white-space: nowrap; }
ul { list-style: none; margin: 0; padding: 0; }
svg { flex: none; }
.defs { position: absolute; width: 0; height: 0; }
.i8 { width: 8px; height: 8px; }
.i10 { width: 10px; height: 10px; }
.i11 { width: 11px; height: 11px; }
.i12 { width: 12px; height: 12px; }
.caret { flex: none; width: 3px; height: 2px; background: #333; clip-path: polygon(0 0, 100% 0, 50% 100%); }
.app { display: flex; flex-direction: column; height: 100vh; }

.titlebar { display: flex; align-items: center; height: 19px; border-bottom: 1px solid #d0d0d0; background: #f7f7f7; flex: none; }
.brand { display: flex; align-items: center; width: 164px; padding-left: 2px; color: #d92a35; font-size: 7px; font-style: italic; }
.brand svg { width: 13px; height: 12px; margin-right: 2px; }
.brand b { font-weight: 800; }
.brand span { font-weight: 400; }
.menus { display: flex; align-items: center; gap: 9px; width: 116px; }
.quick, .quick2 { display: flex; align-items: center; }
.home { width: 15px; }
.q { width: 24px; }
.q .caret { margin-left: auto; margin-right: 5px; }
.select { width: 24px; height: 17px; border: 1px solid #999; background: linear-gradient(90deg, #b5b5b5 17px, #ddd 17px); padding-left: 2px; flex: none; }
.select .caret { margin-left: 4px; }
.quick2 { gap: 7px; padding-left: 4px; width: 73px; }
.quick2 .caret { margin-left: -2px; }
.search { flex: 1; min-width: 0; height: 13px; display: flex; align-items: center; gap: 4px; border: 1px solid #c8c8c8; background: #fff; padding: 0 4px 0 3px; }
.search input { flex: 1; outline: 0; }
.search input::placeholder { color: #666; opacity: 1; }
.prompt { display: flex; width: 8px; height: 8px; background: #222; }

.ribbon { display: flex; height: 44px; flex: none; border-bottom: 1px solid #b9b9b9; background: #f7f7f7; }
.cmd { flex: none; flex-direction: column; justify-content: flex-start; padding-top: 3px; height: 43px; text-align: center; line-height: 7px; color: #222; }
.cmd svg, .cmd em { height: 11px; margin-bottom: 1px; }
.cmd em { font: italic 10px/10px "Liberation Serif", serif; color: #111; }
.cmd em sub { font-size: 7px; vertical-align: -1px; }
.cmd .caret { margin-top: 7px; }
.w24 { width: 24px; } .w30 { width: 31px; } .w34 { width: 33px; } .w38 { width: 38px; }
.line { border-right: 1px solid #cfcfcf; }
.off, .plot button { color: #bbb; }
.covered { width: 76px; border-right: 1px solid #cfcfcf; }
.plot { width: 57px; padding: 2px 0 0 1px; border-right: 1px solid #cfcfcf; }
.plot button { gap: 2px; }
.plot .caret { margin-left: 6px; }
.reports { display: flex; flex-direction: column; gap: 2px; padding: 2px 0 0 1px; }
.reports button { gap: 2px; color: #222; }

.tabrow { display: flex; height: 14px; flex: none; background: #fff; }
.tabs { display: flex; flex: none; background: #ececec; }
.tabs a { display: flex; align-items: center; justify-content: center; border-right: 1px solid #aaa; border-bottom: 1px solid #b5b5b5; background: #d5d5d5; }
.t1 { width: 37px; } .t2 { width: 127px; } .t3 { width: 70px; } .t4 { width: 43px; }
.tabs .t2 { justify-content: flex-start; padding-left: 5px; }
.tabs .t4 { background: #f9f9f9; border-bottom-color: #f9f9f9; font-weight: 600; }
.headsup { display: flex; align-items: center; gap: 4px; padding: 2px 0 0 100px; }
.headsup span { display: flex; align-items: center; gap: 4px; }
.headsup .caret { background: #888; }

.work { display: flex; flex: 1; min-height: 0; background: #fff; }
.panel { position: relative; width: 188px; flex: none; display: flex; flex-direction: column; background: #f7f7f7; border-right: 2px solid #bdbdbd; }
.ptop { height: 13px; border-bottom: 1px solid #ccc; flex: none; }
.ptabs { display: flex; height: 14px; flex: none; border-bottom: 1px solid #ccc; }
.ptabs button { width: 22px; justify-content: center; background: #cfcfcf; border-right: 1px solid #aaa; }
.ptabs .on { background: #f7f7f7; }
.chev { width: 6px; height: 8px; margin: 3px 3px 0 auto; }
.filter { display: flex; align-items: center; height: 14px; flex: none; margin-right: 1px; border: 1px solid #d3d3d3; padding-left: 1px; }
.upper { display: flex; height: 23px; flex: none; }
.upper ul { flex: 1; }
.upper li { display: flex; align-items: center; gap: 3px; height: 12px; padding-left: 13px; }
.vs { width: 8px; display: flex; flex-direction: column; justify-content: space-between; align-items: center; padding: 4px 0; }
.vs svg { width: 6px; height: 4px; }
.hs { display: flex; align-items: center; height: 11px; width: 178px; flex: none; border-top: 1px solid #3f8fc4; padding: 0 2px; gap: 3px; }
.hs svg { width: 4px; height: 6px; }
.hs div { flex: 1; height: 8px; background: #cdcdcd; }
.split { height: 10px; flex: none; border-top: 1px solid #ccc; border-bottom: 1px solid #ccc; }
.lower { display: flex; flex: 1; min-height: 0; overflow: hidden; }
.tree { flex: 1; }
.tree li { display: flex; align-items: center; height: 12px; padding-left: 2px; white-space: nowrap; }
.tree li > svg + span { margin-left: 3px; }
.tree li.root { padding-left: 1px; gap: 2px; }
.tree li.root span { margin-left: 1px; }
.tree li.sub { padding-left: 15px; }
.tree .two svg + svg { margin-left: 3px; }
.tw { width: 11px; height: 5px; flex: none; display: flex; }
.tw::before { content: ""; width: 3px; height: 5px; background: #444; clip-path: polygon(0 0, 100% 50%, 0 100%); }
.tw.open::before { width: 5px; height: 3px; margin-top: 1px; clip-path: polygon(0 0, 100% 0, 50% 100%); }
.tw.none::before { background: none; }
.sel { display: flex; align-items: center; height: 12px; width: 107px; margin-left: -2px; padding-left: 1px; background: #a8cdea; border: 1px solid #69a8d7; }
.sel span { margin-left: 3px; }
.vs.tall { padding: 4px 0 2px; gap: 2px; }
.vs.tall div { width: 7px; height: 131px; background: #cbcbcb; margin-bottom: auto; }
.grip { position: absolute; right: -6px; top: 125px; width: 5px; height: 22px; border: 1px solid #bbb; background: #f3f3f3; }
.scene { flex: 1; min-width: 0; height: 100%; }
.axis { font: bold 5px "Open Sans", sans-serif; }

.sheets { display: flex; height: 12px; flex: none; background: #f5f5f5; }
.sheets a, .navs { display: flex; align-items: center; background: #d9d9d9; border-right: 1px solid #aaa; border-bottom: 1px solid #bbb; gap: 1px; }
.sheets a { justify-content: center; }
.navs { width: 37px; justify-content: space-around; color: #aaa; }
.navs i { font: 5px/8px "DejaVu Sans", sans-serif; }
.s1 { width: 35px; } .s2 { width: 48px; }
.sheets .s3 { width: 54px; background: #fff; font-weight: 700; }
.s4 { width: 95px; }

.filters { display: flex; align-items: center; height: 17px; flex: none; gap: 3px; padding-left: 10px; background: #f7f7f7; border-bottom: 1px solid #aaa; }
.filters .select { height: 14px; border-color: #aaa; }
.filters .select + svg { margin-left: -2px; }
.set { display: flex; justify-content: space-between; width: 436px; border: solid #aaa; border-width: 0 1px; padding: 1px 5px 1px 4px; }
.set svg { width: 12px; height: 12px; }

.status { display: flex; height: 10px; flex: none; line-height: 9px; padding-left: 1px; background: #f7f7f7; }
.fd { margin-left: auto; margin-right: 10px; }
.ea { margin-right: 17px; }

.taskbar { display: flex; align-items: center; height: 21px; flex: none; background: linear-gradient(90deg, #cee8ef, #d4e7ee 60%, #cbd9e9); }
.start { width: 27px; height: 21px; justify-content: center; }
.start svg { width: 10px; height: 10px; }
.find { display: flex; align-items: center; gap: 5px; width: 187px; height: 21px; padding-left: 6px; background: #fff; border-top: 1px solid #ccc; font-size: 8px; font-weight: 400; }
.find input { flex: 1; outline: 0; }
.find input::placeholder { color: #333; opacity: 1; }
.apps { display: flex; }
.apps button { width: 27px; height: 21px; justify-content: center; border-bottom: 2px solid transparent; }
.apps svg { width: 14px; height: 14px; }
.apps .run { border-bottom-color: #1b82cd; }
.apps .cur { background: #edf5f9; }
.sw { display: flex; flex-direction: column; align-items: center; width: 14px; height: 13px; background: #b31c25; color: #fff; font-weight: 800; font-size: 7px; line-height: 8px; }
.sw small { font-size: 5px; line-height: 5px; background: #222; width: 12px; }
.word { width: 13px; height: 11px; background: linear-gradient(90deg, #2558a0 8px, #dce7f5 8px); color: #fff; font-weight: 700; line-height: 11px; text-align: left; padding-left: 1px; }
.tray { display: flex; align-items: center; gap: 5px; margin-left: auto; padding-right: 7px; font-size: 7px; }
.tray span { margin-right: 4px; }

.ctx { position: absolute; left: 61px; top: 0; width: 104px; padding: 4px 1px 1px; background: #f7f7f7; border: 1px solid #aaa; box-shadow: 1px 1px 1px #999; color: #111; }
.ctx button { width: 100%; height: 13px; padding-left: 2px; gap: 2px; }
.ctx button > i { width: 10px; }
.ctx .i10 { width: 10px; }
.ctx hr { margin: 2px 0 3px 17px; border: 0; height: 1px; background: #ccc; }
.ctx u { text-underline-offset: 1px; text-decoration-thickness: 1px; }
.more { margin-left: auto; margin-right: 4px; width: 3px; height: 5px; background: #222; clip-path: polygon(0 0, 100% 50%, 0 100%); }
.mark { position: absolute; left: 61px; top: 1px; width: 106px; height: 20px; border: solid #ee1c25; border-width: 5px 4px; pointer-events: none; }
```
